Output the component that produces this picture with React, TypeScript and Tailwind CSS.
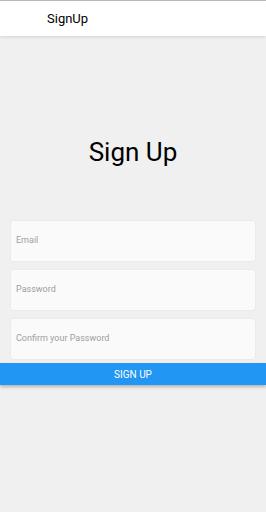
export default function App() {
  const fields = ["Email", "Password", "Confirm your Password"];
  return (
    <div className="min-h-[512px] bg-[#f0f0f0] font-['Roboto',sans-serif] border-t border-[#bdbdbd]">
      <header className="h-[35px] bg-white flex items-center pl-[47px] shadow-[0_1px_3px_rgba(0,0,0,0.12)]">
        <span className="text-[13px] text-black">SignUp</span>
      </header>

      <h1 className="mt-[99px] text-center text-[26px] text-black leading-[34px]">Sign Up</h1>

      <div className="mt-[52px] px-[11px] flex flex-col gap-[9px]">
        {fields.map((f) => (
          <div
            key={f}
            className="h-[40px] bg-[#fafafa] rounded-[2px] shadow-[0_0_2px_rgba(0,0,0,0.08)] flex items-center pl-[5px]"
          >
            <span className="text-[9px] text-[#9e9e9e]">{f}</span>
          </div>
        ))}
      </div>

      <button className="mt-[4px] w-full h-[22px] bg-[#2196f3] text-white text-[10px] uppercase shadow-[0_2px_3px_rgba(0,0,0,0.25)] flex items-center justify-center">
        Sign Up
      </button>
    </div>
  );
}
